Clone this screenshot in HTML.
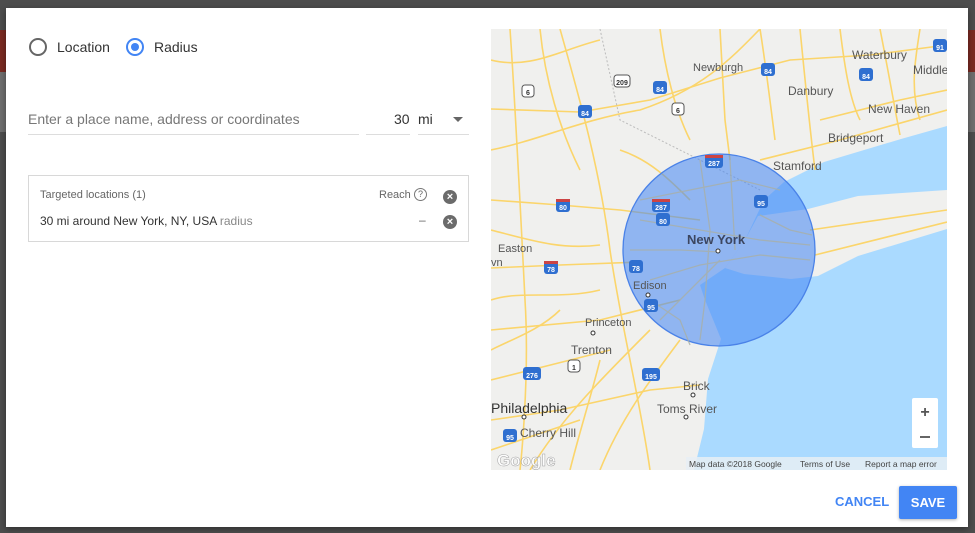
<!DOCTYPE html>
<html><head><meta charset="utf-8"><style>
*{margin:0;padding:0;box-sizing:border-box}
body{width:975px;height:533px;overflow:hidden;background:#4d4d4d;font-family:"Liberation Sans",sans-serif;position:relative}
.bgred{position:absolute;left:0;top:30px;width:975px;height:42px;background:#7a2a22}
.bggray{position:absolute;left:0;top:72px;width:975px;height:60px;background:#6e6e6e}
.dlg{position:absolute;left:6px;top:8px;width:962px;height:519px;background:#fff;box-shadow:0 2px 6px rgba(0,0,0,.4)}
.t{position:absolute;white-space:nowrap}
.radio{position:absolute;width:18px;height:18px;border-radius:50%;border:2px solid #666}
.line{position:absolute;height:1px;background:#ddd}
.box{position:absolute;left:22px;top:167px;width:441px;height:67px;border:1px solid #d8d8d8}
.x{position:absolute;width:14px;height:14px;border-radius:50%;background:#6b6b6b;color:#fff;font-size:11px;line-height:14px;text-align:center;font-weight:bold}
.map{position:absolute;left:485px;top:21px;width:456px;height:441px;overflow:hidden}
</style></head><body>
<div class="bgred"></div><div class="bggray"></div>
<div class="dlg">
 <div class="radio" style="left:23px;top:30px"></div>
 <div class="t" style="left:51px;top:31px;font-size:14px;color:#333">Location</div>
 <div class="radio" style="left:120px;top:30px;border-color:#4285f4"><div style="position:absolute;left:3px;top:3px;width:8px;height:8px;border-radius:50%;background:#4285f4"></div></div>
 <div class="t" style="left:148px;top:31px;font-size:14px;color:#333">Radius</div>
 <div class="t" style="left:22px;top:103px;font-size:14px;color:#777">Enter a place name, address or coordinates</div>
 <div class="line" style="left:22px;top:126px;width:331px"></div>
 <div class="t" style="left:388px;top:103px;font-size:14px;color:#333">30</div>
 <div class="line" style="left:360px;top:126px;width:44px"></div>
 <div class="t" style="left:412px;top:103px;font-size:14px;color:#333">mi</div>
 <div style="position:absolute;left:447px;top:109px;width:0;height:0;border-left:5px solid transparent;border-right:5px solid transparent;border-top:5px solid #666"></div>
 <div class="line" style="left:412px;top:126px;width:51px"></div>
 <div class="box">
  <div class="t" style="left:11px;top:13px;font-size:11px;color:#666">Targeted locations (1)</div>
  <div class="t" style="left:350px;top:13px;font-size:11px;color:#666">Reach</div>
  <div style="position:absolute;left:385px;top:12px;width:13px;height:13px;border:1.3px solid #777;border-radius:50%;font-size:9px;line-height:10px;text-align:center;color:#666">?</div>
  <div class="x" style="left:414px;top:14px">×</div>
  <div class="t" style="left:11px;top:38px;font-size:12px;color:#333">30 mi around New York, NY, USA <span style="color:#888">radius</span></div>
  <div class="t" style="left:390px;top:37px;font-size:12px;color:#666">–</div>
  <div class="x" style="left:414px;top:39px">×</div>
 </div>
 <div class="map">
 <svg width="456" height="441" viewBox="491 29 456 441" font-family="Liberation Sans, sans-serif">
  <rect x="491" y="29" width="456" height="441" fill="#f0f0ee"/>
  <path d="M947,126 L901,139 L824,162 L784,182 L764,200 L745,240 L725,268 L700,285 L705,300 L721,339 L708,379 L704,429 L694,470 L947,470 Z" fill="#aadaff"/>
  <path d="M758,216 L808,209 L858,196 L947,190 L947,229 L858,256 L818,276 L791,279 L744,274 L725,268 L745,240 Z" fill="#f0f0ee"/>
  <g fill="none" stroke="#fbd56b" stroke-width="1.6">
   <path d="M491,109 L580,112 L650,100 L720,78 L790,60 L870,55 L947,45"/>
   <path d="M491,200 L560,205 L620,210 L700,220"/>
   <path d="M491,268 L560,265 L640,262"/>
   <path d="M491,150 C540,140 580,120 640,110 700,90 730,60 760,29"/>
   <path d="M530,470 C560,420 600,380 650,330 690,290 710,270"/>
   <path d="M600,470 C620,420 650,380 680,340"/>
   <path d="M491,420 L560,410 L650,390 L700,385"/>
   <path d="M560,29 C580,100 600,170 610,250 620,320 640,400 650,470"/>
   <path d="M720,29 L725,120 L730,160"/>
   <path d="M800,29 C805,80 810,130 815,170"/>
   <path d="M880,29 C890,80 895,110 900,135"/>
   <path d="M760,160 L840,140 L947,110"/>
   <path d="M810,230 L947,210"/>
   <path d="M815,255 L947,222"/>
   <path d="M510,29 C515,100 520,200 525,300 530,380 520,470 520,470"/>
   <path d="M491,330 L600,320 L680,300"/>
   <path d="M491,60 C530,70 560,50 600,40 640,45 680,35"/>
   <path d="M540,29 C545,80 560,130 580,170 600,210 615,240"/>
   <path d="M491,230 C530,240 560,250 600,245 630,240 650,230"/>
   <path d="M491,300 C520,290 560,300 600,290 630,280 640,270"/>
   <path d="M491,380 C530,370 570,360 610,350 650,345 690,330"/>
   <path d="M491,450 C520,440 550,430 580,420 620,410 660,400"/>
   <path d="M570,470 C580,430 590,400 600,360 610,330 620,310"/>
   <path d="M660,29 C665,70 675,110 690,140 700,150 710,155"/>
   <path d="M760,29 C765,60 770,100 775,140"/>
   <path d="M840,29 C845,70 850,100 860,120"/>
   <path d="M920,29 C915,60 910,90 920,120"/>
   <path d="M820,120 L900,100 L947,90"/>
   <path d="M690,200 C670,180 650,160 620,150 590,140 560,130"/>
   <path d="M491,350 C510,340 540,330 560,310 580,290 600,280"/>
  </g>
  <path d="M600,29 L620,120 L700,160 L760,190" fill="none" stroke="#bbb" stroke-width="1" stroke-dasharray="2,2"/>
  <circle cx="719" cy="250" r="96" fill="rgba(66,133,244,0.55)" stroke="#4a82e8" stroke-width="1.3"/>
  <g fill="none" stroke="#a8b0a8" stroke-width="1.3" opacity=".8">
   <path d="M640,220 L700,230 L760,240 L810,245"/>
   <path d="M650,280 L700,265 L760,255 L810,260"/>
   <path d="M700,160 L710,230 L705,300 L700,340"/>
   <path d="M730,160 L735,250"/>
   <path d="M630,250 L680,250 L720,252"/>
   <path d="M660,320 L690,290 L720,260"/>
   <path d="M640,200 L690,190 L740,180 L780,190"/>
   <path d="M650,300 L680,320 L690,345"/>
   <path d="M760,215 L790,230 L812,235"/>
  </g>
  <g font-size="12" fill="#555">
   <text x="693" y="71" font-size="11">Newburgh</text>
   <text x="788" y="95">Danbury</text>
   <text x="852" y="59">Waterbury</text>
   <text x="913" y="74">Middle</text>
   <text x="868" y="113">New Haven</text>
   <text x="828" y="142">Bridgeport</text>
   <text x="773" y="170">Stamford</text>
   <text x="498" y="252" font-size="11">Easton</text>
   <text x="633" y="289" font-size="11">Edison</text>
   <text x="585" y="326" font-size="11">Princeton</text>
   <text x="571" y="354">Trenton</text>
   <text x="683" y="390">Brick</text>
   <text x="657" y="413">Toms River</text>
   <text x="520" y="437">Cherry Hill</text>
   <text x="491" y="413" font-size="14" fill="#333">Philadelphia</text>
   <text x="687" y="244" font-size="13" font-weight="bold" fill="#3c4660">New York</text>
   <text x="491" y="266" font-size="11">vn</text>
  </g>
  <g fill="#fff" stroke="#333" stroke-width="1">
   <circle cx="718" cy="251" r="2"/><circle cx="648" cy="295" r="2"/><circle cx="593" cy="333" r="2"/><circle cx="693" cy="395" r="2"/><circle cx="686" cy="417" r="2"/><circle cx="524" cy="417" r="2"/>
  </g>
  <g font-size="7" fill="#fff" text-anchor="middle" font-weight="bold">
   <g transform="translate(714,160)"><rect x="-9" y="-5" width="18" height="13" rx="3" fill="#2f6fd0"/><rect x="-9" y="-5" width="18" height="3" fill="#c44"/><text y="6">287</text></g>
   <g transform="translate(661,204)"><rect x="-9" y="-5" width="18" height="13" rx="3" fill="#2f6fd0"/><rect x="-9" y="-5" width="18" height="3" fill="#c44"/><text y="6">287</text></g>
   <g transform="translate(663,218)"><rect x="-7" y="-5" width="14" height="13" rx="3" fill="#2f6fd0"/><text y="6">80</text></g>
   <g transform="translate(761,200)"><rect x="-7" y="-5" width="14" height="13" rx="3" fill="#2f6fd0"/><text y="6">95</text></g>
   <g transform="translate(636,265)"><rect x="-7" y="-5" width="14" height="13" rx="3" fill="#2f6fd0"/><text y="6">78</text></g>
   <g transform="translate(651,304)"><rect x="-7" y="-5" width="14" height="13" rx="3" fill="#2f6fd0"/><text y="6">95</text></g>
   <g transform="translate(563,204)"><rect x="-7" y="-5" width="14" height="13" rx="3" fill="#2f6fd0"/><rect x="-7" y="-5" width="14" height="3" fill="#c44"/><text y="6">80</text></g>
   <g transform="translate(551,266)"><rect x="-7" y="-5" width="14" height="13" rx="3" fill="#2f6fd0"/><rect x="-7" y="-5" width="14" height="3" fill="#c44"/><text y="6">78</text></g>
   <g transform="translate(585,110)"><rect x="-7" y="-5" width="14" height="13" rx="3" fill="#2f6fd0"/><text y="6">84</text></g>
   <g transform="translate(660,86)"><rect x="-7" y="-5" width="14" height="13" rx="3" fill="#2f6fd0"/><text y="6">84</text></g>
   <g transform="translate(768,68)"><rect x="-7" y="-5" width="14" height="13" rx="3" fill="#2f6fd0"/><text y="6">84</text></g>
   <g transform="translate(866,73)"><rect x="-7" y="-5" width="14" height="13" rx="3" fill="#2f6fd0"/><text y="6">84</text></g>
   <g transform="translate(940,44)"><rect x="-7" y="-5" width="14" height="13" rx="3" fill="#2f6fd0"/><text y="6">91</text></g>
   <g transform="translate(532,372)"><rect x="-9" y="-5" width="18" height="13" rx="3" fill="#2f6fd0"/><text y="6">276</text></g>
   <g transform="translate(651,373)"><rect x="-9" y="-5" width="18" height="13" rx="3" fill="#2f6fd0"/><text y="6">195</text></g>
   <g transform="translate(510,434)"><rect x="-7" y="-5" width="14" height="13" rx="3" fill="#2f6fd0"/><text y="6">95</text></g>
   <g transform="translate(622,80)" fill="#333"><rect x="-8" y="-5" width="16" height="12" rx="3" fill="#fff" stroke="#555"/><text y="5">209</text></g>
   <g transform="translate(528,90)" fill="#333"><rect x="-6" y="-5" width="12" height="12" rx="3" fill="#fff" stroke="#555"/><text y="5">6</text></g>
   <g transform="translate(678,108)" fill="#333"><rect x="-6" y="-5" width="12" height="12" rx="3" fill="#fff" stroke="#555"/><text y="5">6</text></g>
   <g transform="translate(574,365)" fill="#333"><rect x="-6" y="-5" width="12" height="12" rx="3" fill="#fff" stroke="#555"/><text y="5">1</text></g>
  </g>
  <text x="497" y="466" font-size="17" font-weight="bold" fill="#fff" stroke="#999" stroke-width=".5" opacity=".9">Google</text>
  <rect x="686" y="457" width="261" height="13" fill="#e8eef4" opacity=".85"/>
  <g font-size="8.5" fill="#444"><text x="689" y="467">Map data ©2018 Google</text><text x="800" y="467">Terms of Use</text><text x="865" y="467">Report a map error</text></g>
  <rect x="912" y="398" width="26" height="50" rx="2" fill="#fff"/>
  <text x="925" y="417" font-size="16" text-anchor="middle" fill="#555" font-weight="bold">+</text>
  <rect x="920" y="436" width="10" height="2" fill="#666"/>
 </svg>
 </div>
 <div class="t" style="left:829px;top:486px;font-size:13px;font-weight:bold;color:#4285f4">CANCEL</div>
 <div style="position:absolute;left:893px;top:478px;width:58px;height:33px;background:#4285f4;border-radius:2px;box-shadow:0 1px 3px rgba(0,0,0,.3);color:#fff;font-size:13px;font-weight:bold;text-align:center;line-height:33px">SAVE</div>
</div>
</body></html>
